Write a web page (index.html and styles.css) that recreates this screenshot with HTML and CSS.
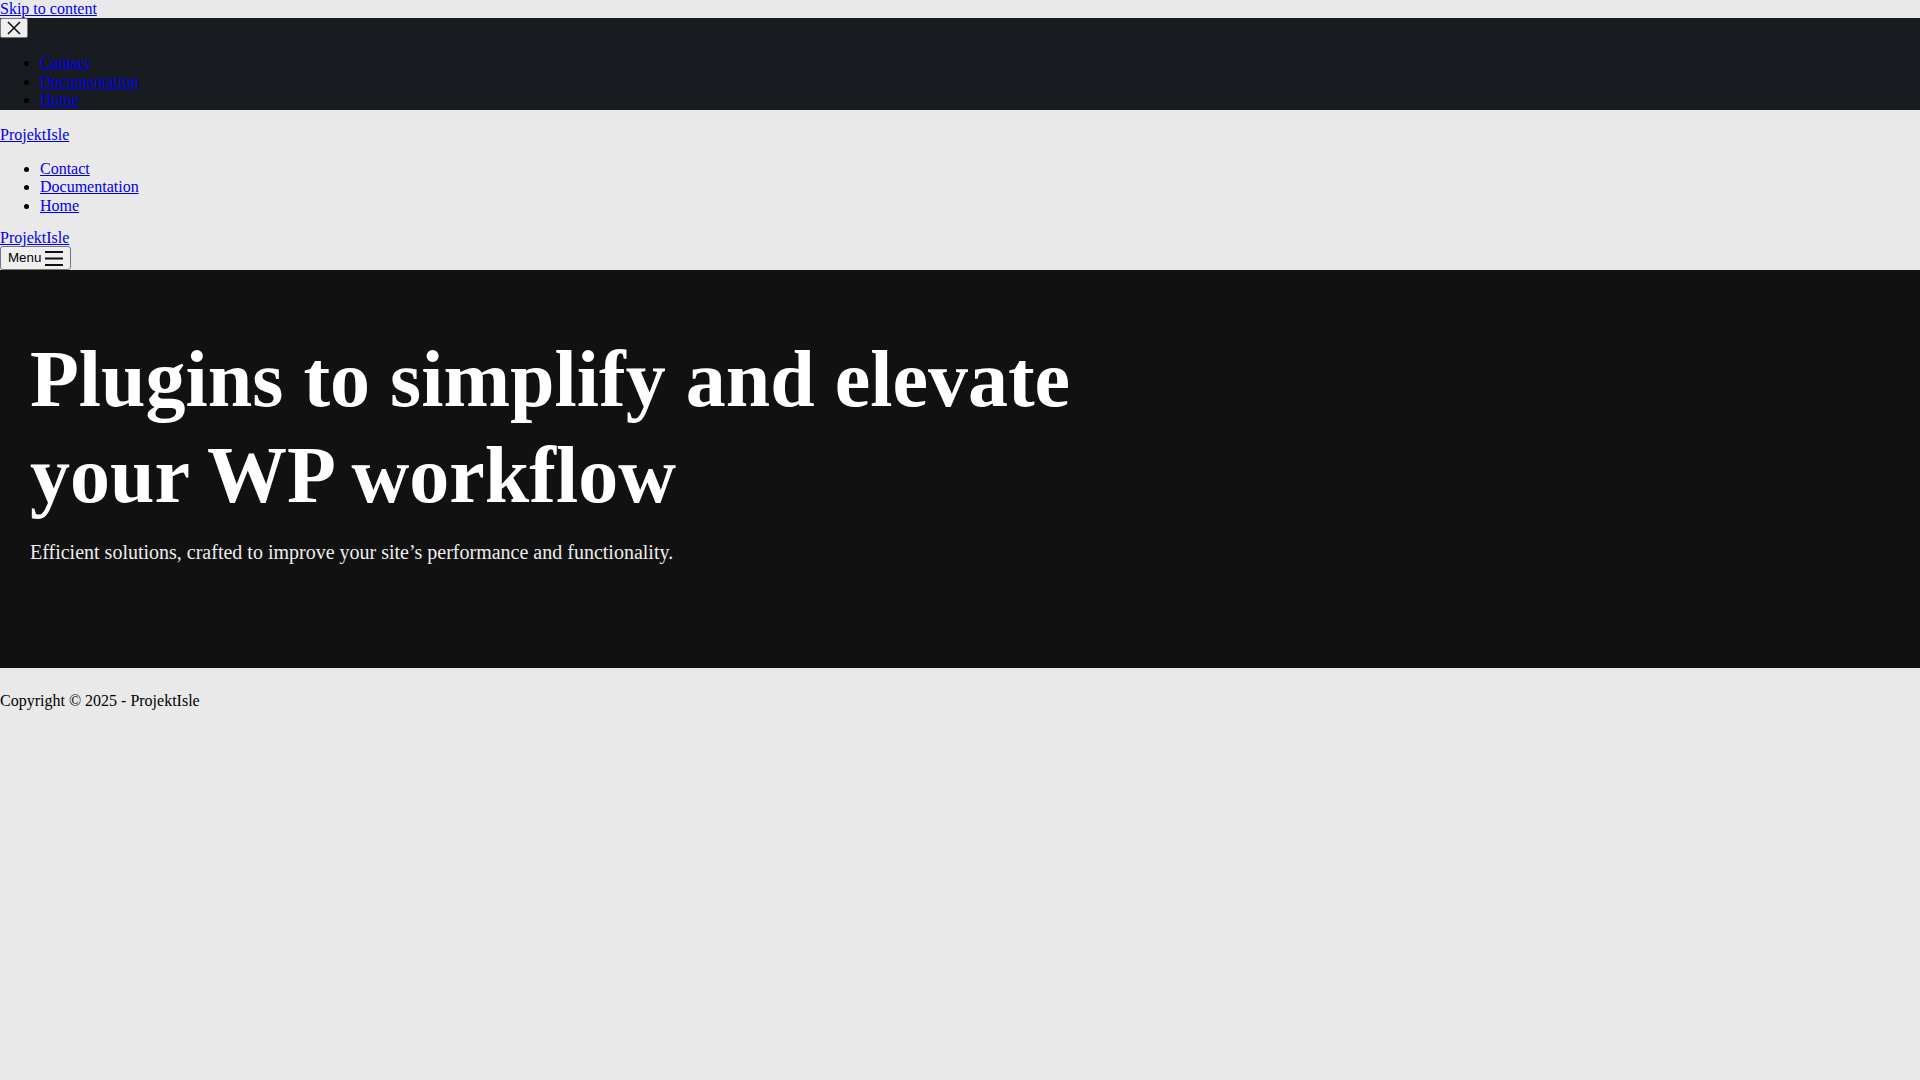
FILE: index.html
```html
<!DOCTYPE html>
<html lang="en">
<head>
  <meta charset="UTF-8" />
  <title>ProjektIsle</title>
  <link rel="stylesheet" href="styles.css">
</head>
<body>

  <a class="skip-link" href="#content">Skip to content</a>

  <div class="mobile-drawer">
    <button class="drawer-close" aria-label="Close menu">
      <svg width="14" height="14" viewBox="0 0 14 14" aria-hidden="true">
        <path d="M1 1 L13 13 M13 1 L1 13" stroke="#111" stroke-width="1.6" fill="none" />
      </svg>
    </button>
    <ul class="menu">
      <li><a href="#">Contact</a></li>
      <li><a href="#">Documentation</a></li>
      <li><a href="#">Home</a></li>
    </ul>
  </div>

  <header class="site-header">
    <div class="header-desktop">
      <p class="site-title"><a href="#">ProjektIsle</a></p>
      <ul class="menu">
        <li><a href="#">Contact</a></li>
        <li><a href="#">Documentation</a></li>
        <li><a href="#">Home</a></li>
      </ul>
    </div>

    <div class="header-mobile">
      <div class="site-title"><a href="#">ProjektIsle</a></div>
      <button class="menu-toggle">
        Menu
        <svg width="18" height="15" viewBox="0 0 18 15" aria-hidden="true">
          <rect x="0" y="0" width="18" height="2" fill="#111" />
          <rect x="0" y="6.5" width="18" height="2" fill="#111" />
          <rect x="0" y="13" width="18" height="2" fill="#111" />
        </svg>
      </button>
    </div>
  </header>

  <main class="hero" id="content">
    <h1 class="hero-title">Plugins to simplify and elevate your WP workflow</h1>
    <p class="hero-text">Efficient solutions, crafted to improve your site’s performance and functionality.</p>
  </main>

  <footer class="site-footer">
    Copyright © 2025 - ProjektIsle
  </footer>

</body>
</html>
```

FILE: styles.css
```css
html, body {
  margin: 0;
  padding: 0;
  background: #e9e9e9;
  font-family: "Liberation Serif", "Times New Roman", serif;
  font-size: 16px;
  line-height: 1.15;
  color: #000;
}

a {
  color: #0000ee;
}

.skip-link {
  display: block;
}

.mobile-drawer {
  background: #181b1f;
}

.drawer-close {
  display: block;
  margin: 0;
  padding: 2px 6px;
  border: 1px solid #767676;
  border-radius: 2px;
  background: #efefef;
  line-height: 0;
  cursor: pointer;
}

.menu {
  margin: 16px 0;
  padding-left: 40px;
}
.header-desktop .menu {
  margin-bottom: 15px;
}

.site-title {
  margin: 16px 0;
}
.header-mobile .site-title {
  margin: 0;
  line-height: 16px;
}

.menu-toggle {
  display: flex;
  align-items: center;
  gap: 4px;
  margin: 0;
  padding: 3.5px 7px;
  border: 1px solid #767676;
  border-radius: 3px;
  background: #efefef;
  font-family: "Liberation Sans", Arial, sans-serif;
  font-size: 13.33px;
  line-height: 14px;
  color: #000;
  cursor: pointer;
}

.hero {
  background: #111111;
  padding: 61px 30px 104px;
}

.hero-title {
  margin: 0;
  max-width: 1090px;
  font-size: 80px;
  line-height: 96px;
  font-weight: bold;
  color: #fff;
}

.hero-text {
  margin: 18px 0 0;
  font-size: 20px;
  color: #eeeeee;
}

.site-footer {
  padding: 24px 0;
}
```
